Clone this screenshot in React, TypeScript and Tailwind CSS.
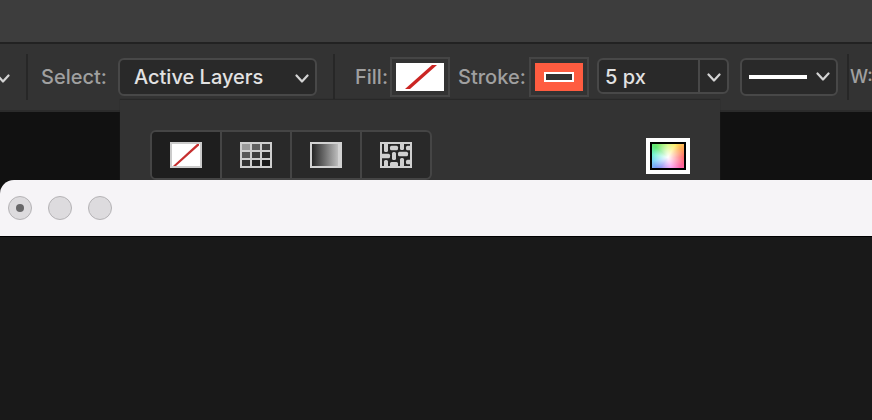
import React from 'react';

const Chevron: React.FC = () => (
  <svg width="14" height="10" viewBox="0 0 14 10" fill="none" className="shrink-0" aria-hidden="true">
    <path d="M1.5 1.5 7 7.5l5.5-6" stroke="#d4d4d4" strokeWidth="2.2" strokeLinecap="round" strokeLinejoin="round" />
  </svg>
);

const Separator: React.FC = () => <div className="h-[46px] w-0.5 shrink-0 bg-[#272727]" />;

const NoneIcon: React.FC = () => (
  <svg width="32" height="26" viewBox="0 0 32 26" aria-hidden="true">
    <rect width="32" height="26" fill="#cbcbcb" />
    <rect x="2" y="2" width="28" height="22" fill="#fff" />
    <path d="M3 24 27 2h2v1.5L6 24z" fill="#c62f2f" />
  </svg>
);

const GRID_SHADES = [
  ['#9a9a9a', '#606060', '#414141'],
  ['#575757', '#3f3f3f', '#2b2b2b'],
  ['#333333', '#252525', '#1a1a1a'],
];

const SolidIcon: React.FC = () => (
  <svg width="32" height="26" viewBox="0 0 32 26" shapeRendering="crispEdges" aria-hidden="true">
    <rect width="32" height="26" fill="#cfcfcf" />
    {GRID_SHADES.map((row, r) =>
      row.map((shade, c) => (
        <rect key={`${r}-${c}`} x={2 + c * 10} y={2 + r * 8} width="8" height="6" fill={shade} />
      )),
    )}
  </svg>
);

const GradientIcon: React.FC = () => (
  <svg width="32" height="26" viewBox="0 0 32 26" aria-hidden="true">
    <defs>
      <linearGradient id="tab-gradient">
        <stop offset="0" stopColor="#252525" />
        <stop offset="0.5" stopColor="#707070" />
        <stop offset="1" stopColor="#bdbdbd" />
      </linearGradient>
    </defs>
    <rect width="32" height="26" fill="#d2d2d2" />
    <rect x="2" y="2" width="26" height="22" fill="url(#tab-gradient)" />
  </svg>
);

const PatternIcon: React.FC = () => (
  <svg width="32" height="26" viewBox="0 0 32 26" aria-hidden="true">
    <rect width="32" height="26" fill="#d0d0d0" />
    <rect x="2" y="2" width="28" height="22" fill="#262626" />
    <g fill="#d0d0d0">
      <rect x="4" y="-2" width="4" height="12" rx="1.5" />
      <rect x="10" y="3.7" width="8" height="4.6" rx="1.5" />
      <rect x="20" y="-2" width="4" height="10" rx="1.5" />
      <rect x="26" y="3.7" width="8" height="4.6" rx="1.5" />
      <rect x="-2" y="11.7" width="12" height="4.6" rx="1.5" />
      <rect x="12" y="10" width="4" height="8" rx="1.5" />
      <rect x="18" y="9.7" width="10" height="4.6" rx="1.5" />
      <rect x="4" y="18" width="4" height="10" rx="1.5" />
      <rect x="10" y="20" width="8" height="5" rx="1.5" />
      <rect x="20" y="16" width="4" height="12" rx="1.5" />
      <rect x="26" y="17.7" width="8" height="4.6" rx="1.5" />
    </g>
  </svg>
);

const FILL_TYPES = [
  { id: 'none', label: 'No color', icon: <NoneIcon /> },
  { id: 'solid', label: 'Solid color', icon: <SolidIcon /> },
  { id: 'gradient', label: 'Gradient', icon: <GradientIcon /> },
  { id: 'pattern', label: 'Pattern', icon: <PatternIcon /> },
];

const OptionsBar: React.FC = () => (
  <header className="flex h-[70px] items-start overflow-hidden border-y-2 border-t-[#222222] border-b-[#2b2b2b] bg-[#333333] pt-2.5 text-xl leading-6 font-medium whitespace-nowrap text-[#a0a0a0]">
    <div className="flex h-[46px] shrink-0 items-center">
      <button type="button" aria-label="Tool presets" className="-ml-1 pt-1">
        <Chevron />
      </button>
      <div className="ml-4">
        <Separator />
      </div>

      <label htmlFor="select-layers" className="ml-[13px] w-[77px]">Select:</label>
      <div className="relative">
        <select
          id="select-layers"
          className="h-[38px] w-[199px] appearance-none rounded-md border-2 border-[#484848] bg-[#292929] pl-3.5 text-[#e2e2e2]"
        >
          <option>Active Layers</option>
          <option>All Layers</option>
        </select>
        <span className="pointer-events-none absolute inset-y-0 right-2 flex items-center pt-1">
          <Chevron />
        </span>
      </div>
      <div className="ml-4">
        <Separator />
      </div>

      <label htmlFor="fill-swatch" className="ml-5 w-[35px]">Fill:</label>
      <button id="fill-swatch" type="button" className="border-2 border-[#454545] p-1">
        <svg width="48" height="28" viewBox="0 0 48 28" className="block bg-white" aria-hidden="true">
          <path d="M9 26 36 2h5L14 26z" fill="#cb2523" />
        </svg>
      </button>

      <label htmlFor="stroke-swatch" className="ml-2 w-[71px]">Stroke:</label>
      <button id="stroke-swatch" type="button" className="border-2 border-[#454545] p-1">
        <span className="flex h-7 w-12 items-center justify-center bg-[#ff5c40]">
          <span className="h-2.5 w-[30px] border-2 border-white bg-[#333333]" />
        </span>
      </button>

      <div className="mb-0.5 ml-2 flex h-9 w-[132px] overflow-hidden rounded-md border-2 border-[#484848] bg-[#292929]">
        <input
          aria-label="Stroke width"
          defaultValue="5 px"
          className="min-w-0 flex-1 bg-transparent pt-0.5 pl-1.5 text-[#e2e2e2] outline-none"
        />
        <button type="button" aria-label="Stroke width slider" className="flex w-[29px] items-center justify-center border-l-2 border-[#484848] pt-1">
          <Chevron />
        </button>
      </div>

      <button
        type="button"
        aria-label="Stroke type"
        className="ml-[11px] flex h-[38px] w-[98px] items-center justify-between rounded-md border-2 border-[#484848] bg-[#292929] pr-1.5 pl-[7px]"
      >
        <span className="h-1 w-[58px] bg-white" />
        <Chevron />
      </button>
      <div className="ml-[9px]">
        <Separator />
      </div>

      <label htmlFor="shape-width" className="ml-px text-lg leading-6">W:</label>
      <input
        id="shape-width"
        defaultValue=""
        className="ml-1 h-9 w-24 rounded-md border-2 border-[#484848] bg-[#292929] pl-1.5 text-[#e2e2e2]"
      />
    </div>
  </header>
);

const FillPopover: React.FC = () => {
  const [active, setActive] = React.useState('none');

  return (
    <div className="absolute -top-3 left-[120px] flex h-24 w-[600px] items-start justify-between bg-[#333333] px-[30px] pt-[30px] shadow-[0_-1px_1px_#282828]">
      <div className="flex h-[50px] overflow-hidden rounded-md border-2 border-[#454545] bg-[#292929]">
        {FILL_TYPES.map((type) => (
          <button
            key={type.id}
            type="button"
            aria-label={type.label}
            aria-pressed={active === type.id}
            onClick={() => setActive(type.id)}
            className={`flex w-[70px] items-center justify-center border-r-2 border-[#454545] last:w-[68px] last:border-r-0 ${
              active === type.id ? 'bg-[#1e1e1e]' : ''
            }`}
          >
            {type.icon}
          </button>
        ))}
      </div>
      <button type="button" aria-label="Color picker" className="mt-2 border-4 border-white bg-black p-0.5">
        <span className="block h-6 w-8 bg-[radial-gradient(circle_at_50%_55%,#ffffff_0%,#ffffff30_75%),conic-gradient(from_0deg_at_50%_55%,#c8f850,#ffe83c_30deg,#ff9a2e_55deg,#ff4a4a_90deg,#ff3f8c_125deg,#f45cf0_165deg,#5a60f0_215deg,#5cc8f8_255deg,#50f0c8_280deg,#3ce050_310deg,#c8f850)]" />
      </button>
    </div>
  );
};

const App: React.FC = () => (
  <div className="flex min-h-screen flex-col overflow-hidden bg-[#111111] font-['Inter','Liberation_Sans',sans-serif]">
    <div className="h-[42px] bg-[#3d3d3d]" />
    <OptionsBar />
    <main className="relative h-[68px]">
      <FillPopover />
    </main>
    <section className="relative flex flex-1 flex-col overflow-hidden rounded-tl-[14px] bg-[#191919]">
      <div className="flex h-[57px] items-center gap-4 border-b border-black bg-[#f6f4f7] pl-2">
        <button type="button" aria-label="Close" className="flex size-6 items-center justify-center rounded-full border border-[#b5b3b6] bg-[#dddbde]">
          <span className="size-2 rounded-full bg-[#686769]" />
        </button>
        <button type="button" aria-label="Minimize" className="size-6 rounded-full border border-[#b5b3b6] bg-[#dddbde]" />
        <button type="button" aria-label="Zoom" className="size-6 rounded-full border border-[#b5b3b6] bg-[#dddbde]" />
      </div>
    </section>
  </div>
);

export default App;
